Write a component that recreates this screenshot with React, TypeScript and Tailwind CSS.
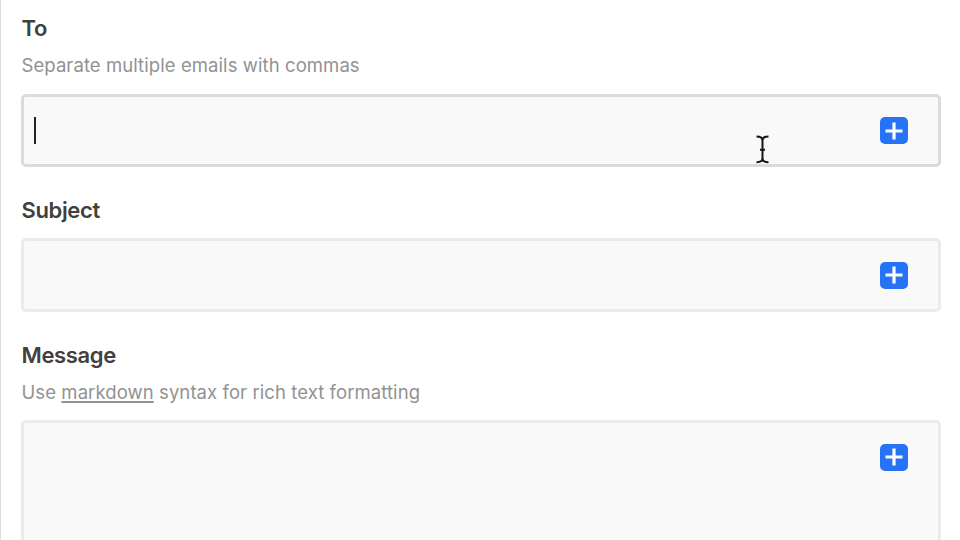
import type { ReactNode } from "react";

type FieldProps = {
  label: string;
  hint?: ReactNode;
  focused?: boolean;
  multiline?: boolean;
};

function AddButton() {
  return (
    <button
      aria-label="Add"
      className="flex size-[27.4px] shrink-0 items-center justify-center rounded-[5px] bg-[#2673f8]"
    >
      <svg width="18" height="18" viewBox="0 0 18 18" fill="none">
        <path d="M9 0.5V17.5M0.5 9H17.5" stroke="#fff" strokeWidth="3.2" />
      </svg>
    </button>
  );
}

function Field({ label, hint, focused, multiline }: FieldProps) {
  return (
    <div className="flex flex-col">
      <label className="h-9 pl-[0.5px] text-[22px] leading-[35px] font-semibold tracking-[-0.35px] text-[#404040]">
        {label}
      </label>
      {hint && (
        <p className="h-[37.5px] pl-[0.5px] text-[18.5px] leading-[37.5px] tracking-[0.08px] text-[#929292]">
          {hint}
        </p>
      )}
      <div
        className={`mt-[9.2px] flex items-start justify-between rounded-[5px] border-3 bg-[#f9f9f9] pt-[20.3px] pr-[30.3px] pl-2.5 ${
          focused ? "border-[#dbdbdb]" : "border-[#ebebeb]"
        } ${multiline ? "h-40" : "h-[73.7px]"}`}
      >
        <div className="h-7">
          {focused && <div className="h-[27px] w-0.5 bg-[#222]" />}
        </div>
        <AddButton />
      </div>
    </div>
  );
}

function TextCursor() {
  return (
    <svg
      className="absolute top-[135px] left-[754px]"
      width="15"
      height="29"
      viewBox="0 0 15 29"
      fill="none"
      stroke="#161616"
      strokeWidth="2"
    >
      <path d="M1.5 1.6C4.8 1.6 7.5 2.3 7.5 5.2C7.5 2.3 10.2 1.6 13.5 1.6" />
      <path d="M7.5 4.5V24.5M5 14.8H10" />
      <path d="M1.5 27.2C4.8 27.2 7.5 26.5 7.5 23.6C7.5 26.5 10.2 27.2 13.5 27.2" />
    </svg>
  );
}

export default function App() {
  return (
    <main className="relative h-[540px] w-[960px] overflow-hidden border-l border-[#dedede] bg-white font-[Inter,sans-serif]">
      <form className="flex flex-col gap-[25.7px] pt-[11px] pr-[19px] pl-5">
        <Field label="To" hint="Separate multiple emails with commas" focused />
        <Field label="Subject" />
        <Field
          label="Message"
          hint={
            <>
              Use{" "}
              <a className="underline decoration-[1.5px] underline-offset-2">
                markdown
              </a>{" "}
              syntax for rich text formatting
            </>
          }
          multiline
        />
      </form>
      <TextCursor />
    </main>
  );
}
